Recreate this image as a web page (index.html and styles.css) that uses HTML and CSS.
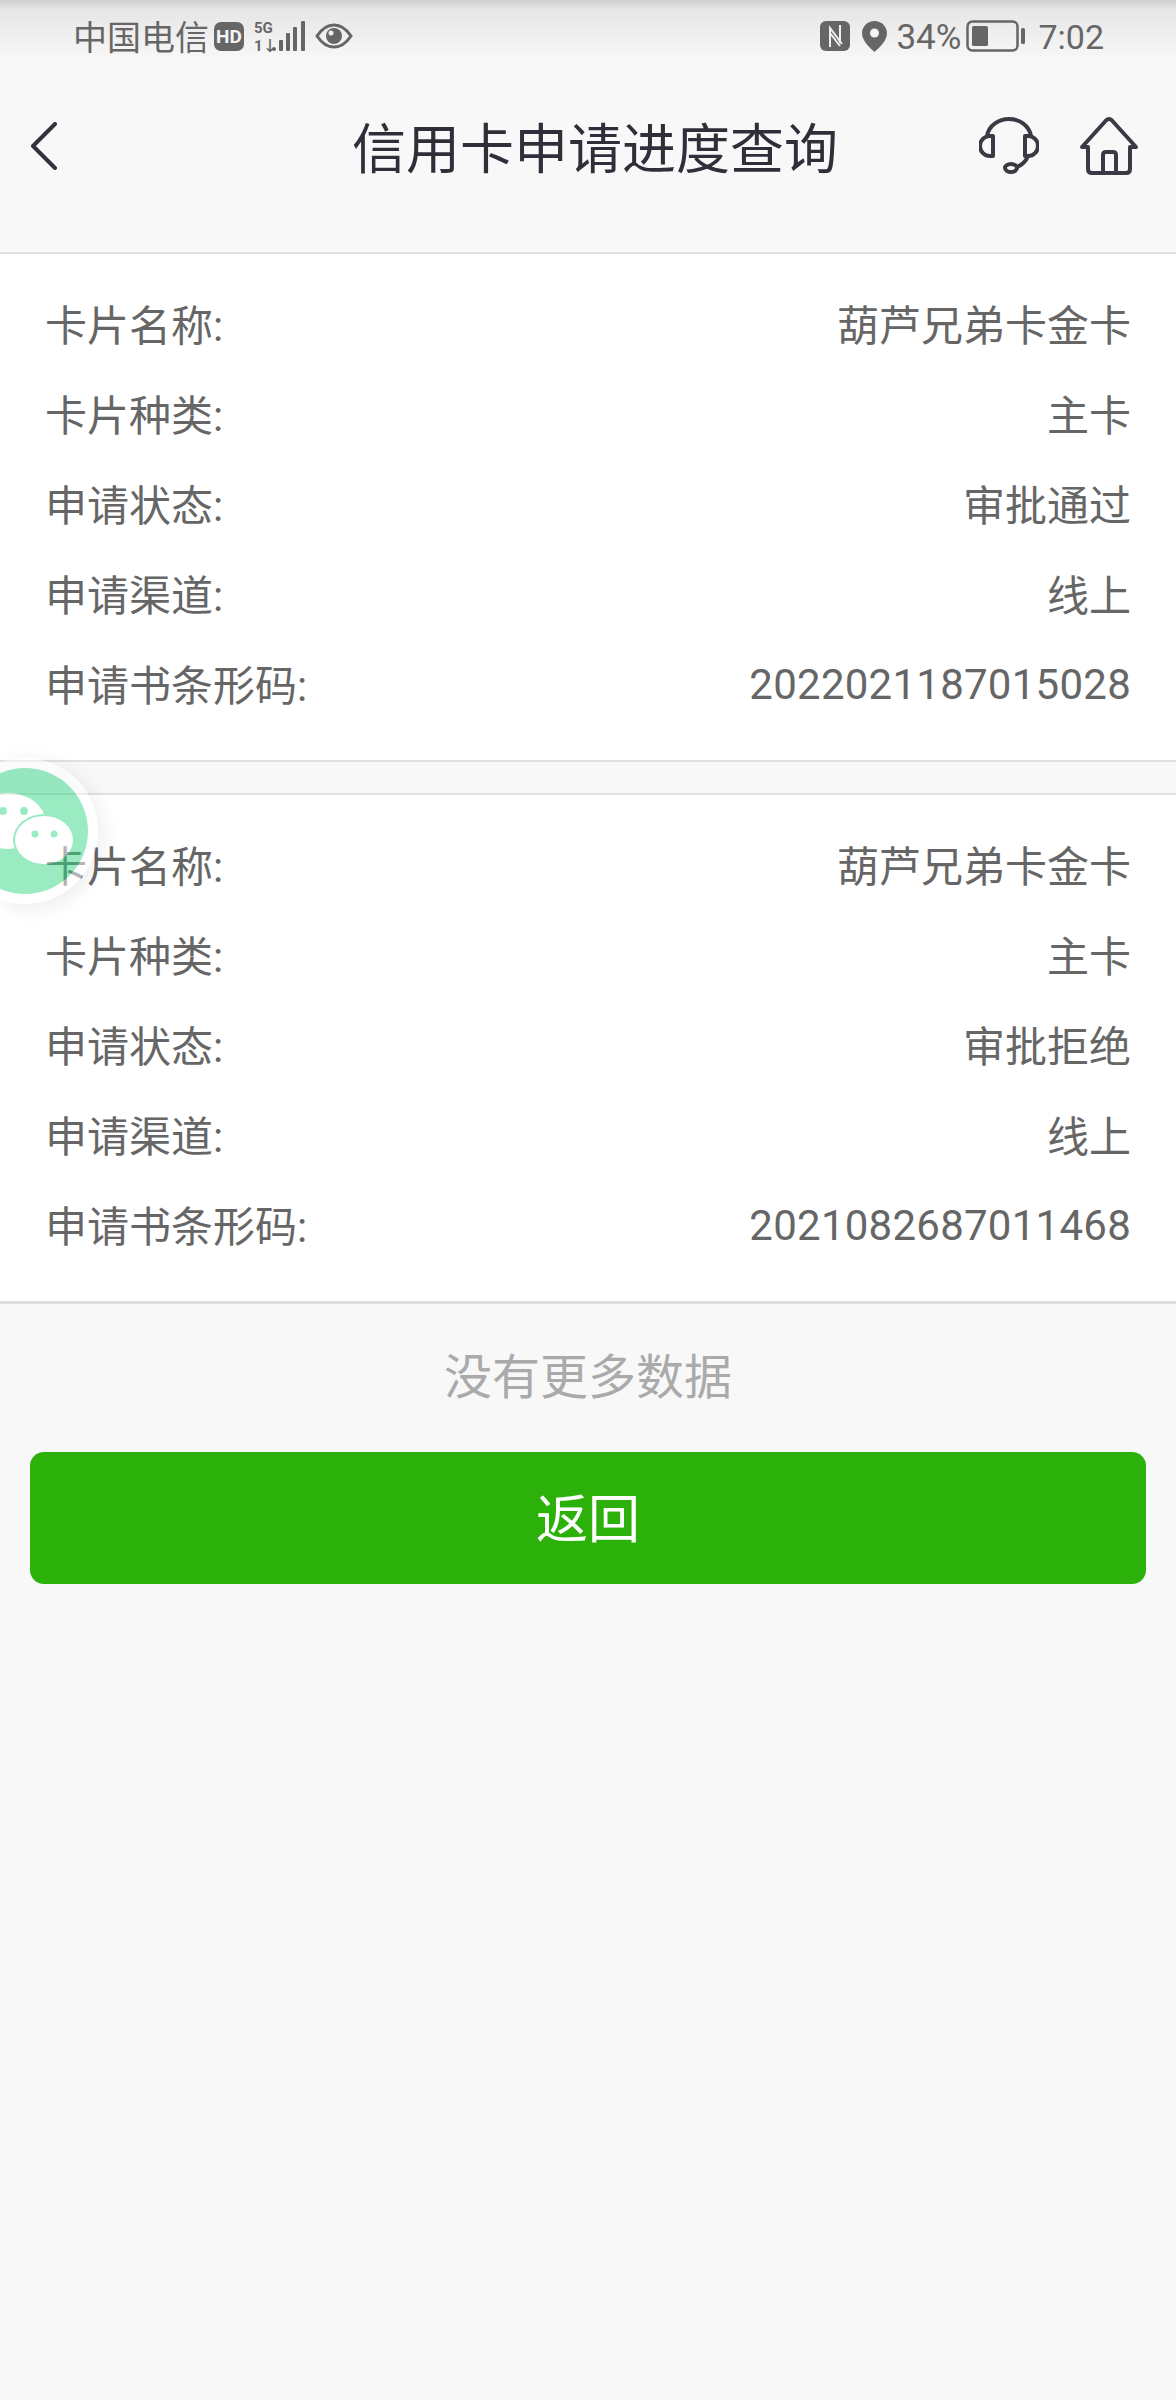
FILE: index.html
```html
<!DOCTYPE html>
<html>
  <head>
    <title>信用卡申请进度查询</title>
    <link rel="stylesheet" href="styles.css">
  </head>
  <body>
    <div class="statusbar">
      <div class="status-left">
        <span class="carrier">中国电信</span>
        <span class="hd">HD</span>
        <svg class="signal" width="51" height="32" viewBox="0 0 51 32">
          <text x="0" y="13" class="net">5G</text>
          <text x="0" y="31" class="net">1↓</text>
          <rect x="18" y="27" width="4" height="4" rx="2"/>
          <rect x="25" y="20" width="4" height="11" rx="1"/>
          <rect x="32" y="13" width="4" height="18" rx="1"/>
          <rect x="39" y="7" width="4" height="24" rx="1"/>
          <rect x="47" y="1" width="4" height="30" rx="1"/>
        </svg>
        <svg class="eye" width="38" height="26" viewBox="0 0 38 26">
          <path d="M2 13C8 4 14 2 19 2s11 2 17 11c-6 9-12 11-17 11S8 22 2 13z" fill="none" stroke="#666" stroke-width="3"/>
          <circle cx="19" cy="13" r="8" fill="#666"/>
          <circle cx="16" cy="10" r="2.5" fill="#f0f0f0"/>
        </svg>
      </div>
      <div class="status-right">
        <svg width="30" height="30" viewBox="0 0 30 30">
          <rect width="30" height="30" rx="6" fill="#666"/>
          <path d="M10 26V7l12 16M20 4v18M10 12l10 13" fill="none" stroke="#f0f0f0" stroke-width="2"/>
        </svg>
        <svg class="pin" width="25" height="31" viewBox="0 0 25 31">
          <path d="M12.5 0C5.600 0 0 5.500 0 12.300 0 20 8 27 12.500 31 17 27 25 20 25 12.300 25 5.500 19.400 0 12.500 0z" fill="#666"/>
          <circle cx="12.5" cy="12" r="4.500" fill="#f4f4f4"/>
        </svg>
        <span class="percent">34%</span>
        <svg class="battery" width="60" height="32" viewBox="0 0 60 32">
          <rect x="1.500" y="1.500" width="50" height="29" rx="5" fill="none" stroke="#666" stroke-width="2.500"/>
          <rect x="6" y="6" width="16" height="20" rx="1.500" fill="#666"/>
          <rect x="55" y="8" width="4" height="16" rx="1.500" fill="#666"/>
        </svg>
        <span class="clock">7:02</span>
      </div>
    </div>

    <div class="navbar">
      <div class="nav-back">
        <svg width="28" height="48" viewBox="0 0 28 48">
          <path d="M25 2L3 24l22 22" fill="none" stroke="#33333d" stroke-width="4" stroke-linecap="round" stroke-linejoin="round"/>
        </svg>
      </div>
      <div class="nav-title">信用卡申请进度查询</div>
      <div class="nav-icons">
        <svg width="60" height="58" viewBox="0 0 60 58">
          <g fill="none" stroke="#3a3a44" stroke-width="4" stroke-linecap="round" stroke-linejoin="round">
            <path d="M8 19C10 8 20 2 30 2s20 6 22 17"/>
            <path d="M14 19h-3a10 10 0 0 0 0 20h3z"/>
            <path d="M46 19h3a10 10 0 0 1 0 20h-3z"/>
            <path d="M49 39c-2 5-6 9-11 11"/>
            <ellipse cx="32" cy="51" rx="6" ry="4"/>
          </g>
        </svg>
        <svg width="60" height="60" viewBox="0 0 60 60">
          <path d="M9 31H3L27 4.500q3-3 6 0L57 31h-6v22q0 4-4 4H13q-4 0-4-4zM24 57V39q0-3 3-3h7q3 0 3 3v18" fill="none" stroke="#3a3a44" stroke-width="4" stroke-linejoin="round"/>
        </svg>
      </div>
    </div>

    <div class="card">
      <div class="row"><span>卡片名称:</span><span>葫芦兄弟卡金卡</span></div>
      <div class="row"><span>卡片种类:</span><span>主卡</span></div>
      <div class="row"><span>申请状态:</span><span>审批通过</span></div>
      <div class="row"><span>申请渠道:</span><span>线上</span></div>
      <div class="row"><span>申请书条形码:</span><span class="code">2022021187015028</span></div>
    </div>

    <div class="card second">
      <div class="row"><span>卡片名称:</span><span>葫芦兄弟卡金卡</span></div>
      <div class="row"><span>卡片种类:</span><span>主卡</span></div>
      <div class="row"><span>申请状态:</span><span>审批拒绝</span></div>
      <div class="row"><span>申请渠道:</span><span>线上</span></div>
      <div class="row"><span>申请书条形码:</span><span class="code">2021082687011468</span></div>
    </div>

    <div class="no-more">没有更多数据</div>
    <button class="back-button">返回</button>

    <svg class="wechat-float" width="104" height="156" viewBox="0 0 104 156">
      <circle cx="25" cy="76" r="73" fill="#fff"/>
      <circle cx="25" cy="76" r="63" fill="#37d787"/>
      <ellipse cx="8" cy="66" rx="37" ry="28" fill="#fff"/>
      <path d="M-8 85l-6 14 18-9z" fill="#fff"/>
      <ellipse cx="44" cy="85" rx="31" ry="26" fill="#37d787"/>
      <ellipse cx="44" cy="85" rx="29" ry="24" fill="#fff"/>
      <circle cx="3" cy="56" r="4" fill="#37d787"/>
      <circle cx="24" cy="56" r="4" fill="#37d787"/>
      <circle cx="35" cy="79" r="3.500" fill="#37d787"/>
      <circle cx="54" cy="79" r="3.500" fill="#37d787"/>
    </svg>
  </body>
</html>
```

FILE: styles.css
```css
body {
  font-family: Roboto, "Noto Sans CJK SC", sans-serif;
  margin: 0;
  padding: 0;
  min-height: 2400px;
  background: #f8f8f9;
  color: #666;
  position: relative;
  overflow-x: hidden;
}

/* Phone status bar */
.statusbar {
  height: 74px;
  box-sizing: border-box;
  padding: 0 72px 2px 73px;
  display: flex;
  align-items: center;
  justify-content: space-between;
  font-size: 34px;
  background: linear-gradient(#cfcfcf 0, #e6e6e6 10px, #f8f8f9 60px);
}

.status-left, .status-right {
  display: flex;
  align-items: center;
}

.carrier { padding-bottom: 2px; white-space: nowrap; }

.hd {
  width: 30px;
  height: 29px;
  margin-left: 5px;
  border-radius: 7px;
  background: #666;
  color: #f4f4f4;
  font-size: 19px;
  font-weight: 700;
  line-height: 29px;
  text-align: center;
}

.signal { margin-left: 10px; fill: #666; }
.net { font-size: 15px; font-weight: 700; fill: #666; }
.eye { margin-left: 10px; }
.pin { margin-left: 12px; }
.percent { margin-left: 9px; font-size: 35px; padding-top: 2px; }
.battery { margin-left: 5px; }
.clock { margin-left: 12px; padding-top: 2px; }

/* Title bar */
.navbar {
  height: 178px;
  box-sizing: border-box;
  padding: 0 37px 34px 30px;
  display: flex;
  align-items: center;
  color: #2f2f3a;
}

.nav-back {
  width: 181px;
  display: flex;
}

.nav-title {
  flex: 1;
  font-size: 54px;
  text-align: center;
  padding-bottom: 2px;
}

.nav-icons {
  display: flex;
  gap: 40px;
  align-items: center;
}

/* Application records */
.card {
  background: #fff;
  border-top: 2px solid #e0e0e0;
  border-bottom: 2px solid #e0e0e0;
  padding: 27px 0 29px;
}

.second {
  margin-top: 31px;
  border-bottom: 3px solid #ddd;
}

.row {
  height: 90px;
  box-sizing: border-box;
  padding: 0 45px 8px;
  display: flex;
  align-items: center;
  justify-content: space-between;
  font-size: 42px;
}

.code {
  letter-spacing: 0.25px;
  margin-top: 4px;
}

.no-more {
  height: 148px;
  box-sizing: border-box;
  padding-bottom: 10px;
  display: flex;
  align-items: center;
  justify-content: center;
  font-size: 48px;
  color: #aaa;
}

.back-button {
  display: block;
  width: 1116px;
  height: 132px;
  margin: 0 30px;
  padding: 0 0 5px;
  border: 0;
  border-radius: 14px;
  background: #2bb10a;
  color: #fff;
  font-family: inherit;
  font-size: 52px;
}

/* Floating button, half hidden at the left edge */
.wechat-float {
  position: absolute;
  left: 0;
  top: 755px;
  opacity: 0.5;
  overflow: hidden;
  filter: drop-shadow(4px 4px 10px rgba(0, 0, 0, 0.15));
}
```
